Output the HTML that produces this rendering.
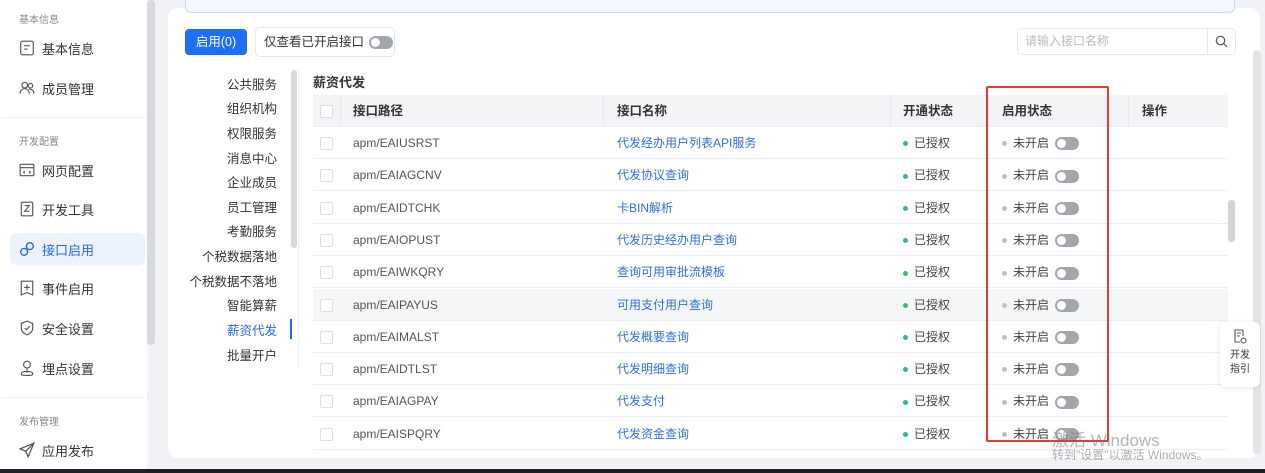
<!DOCTYPE html>
<html><head><meta charset="utf-8"><style>
*{margin:0;padding:0;box-sizing:border-box}
body{width:1265px;height:473px;overflow:hidden;background:#f0f2f5;font-family:"Liberation Sans","Noto Sans CJK SC",sans-serif;font-size:12px;color:#333;position:relative}
.a{position:absolute}
.side{left:0;top:0;width:147px;height:470px;background:#fff}
.sec{left:19px;font-size:10px;color:#888}
.it{left:19px;font-size:13px;color:#333;display:flex;align-items:center;gap:7px;height:20px}
.it svg{width:16px;height:16px}
.hr{left:3px;width:142px;height:1px;background:#eef0f3}
.card{left:168px;top:8px;width:1092px;height:450px;background:#fff;border-radius:10px}
.cat{width:90px;text-align:right;font-size:12.5px;color:#333}
.tg{width:24px;height:13px;border-radius:7px;background:#a3a6ad;position:relative;display:inline-block;vertical-align:middle}
.tg:after{content:"";position:absolute;left:2px;top:2px;width:9px;height:9px;border-radius:50%;background:#fff}
.row{left:313px;width:915px;height:32px;border-bottom:1px solid #ebeef5;font-size:12px}
.row div{position:absolute;top:0;line-height:32px}
.cb{width:13px;height:13px;border:1px solid #dcdfe6;border-radius:2px;background:#fff;top:10px!important}
.dot{display:inline-block;width:5px;height:5px;border-radius:50%;margin-right:6px;vertical-align:middle}
</style></head><body>
<div class="a side"></div>
<div class="a" style="left:147px;top:0;width:8px;height:345px;background:#d8d9db;border-radius:4px"></div>
<div class="a sec" style="top:11px">基本信息</div>
<div class="a it" style="top:38px"><svg viewBox="0 0 14 14" fill="none" stroke="#555" stroke-width="1"><rect x="1.5" y="1" width="11" height="12" rx="1.5"/><path d="M4.5 5h5M4.5 8h3"/></svg>基本信息</div>
<div class="a it" style="top:78px"><svg viewBox="0 0 14 14" fill="none" stroke="#555" stroke-width="1"><circle cx="5" cy="4.5" r="2.5"/><circle cx="10" cy="5" r="2"/><path d="M1 12c0-3 2-4.5 4-4.5s4 1.5 4 4.5M9 8c2 0 4 1 4 4"/></svg>成员管理</div>
<div class="a hr" style="top:117px"></div>
<div class="a sec" style="top:133px">开发配置</div>
<div class="a it" style="top:160px"><svg viewBox="0 0 14 14" fill="none" stroke="#555" stroke-width="1"><rect x="1" y="2" width="12" height="10" rx="1"/><path d="M1 5h12M5 8l-1 1 1 1M9 8l1 1-1 1"/></svg>网页配置</div>
<div class="a it" style="top:199px"><svg viewBox="0 0 14 14" fill="none" stroke="#555" stroke-width="1"><rect x="2" y="1" width="10" height="12" rx="1"/><path d="M5 4h4l-4 5h4"/></svg>开发工具</div>
<div class="a" style="left:10px;top:233px;width:135px;height:32px;background:#edf3fe;border-radius:6px"></div>
<div class="a it" style="top:239px;color:#2468f2"><svg viewBox="0 0 14 14" fill="none" stroke="#2468f2" stroke-width="1.2"><circle cx="4.5" cy="9.5" r="3"/><circle cx="9.5" cy="4.5" r="3"/></svg>接口启用</div>
<div class="a it" style="top:278px"><svg viewBox="0 0 14 14" fill="none" stroke="#555" stroke-width="1"><path d="M2 1h10v12l-5-2-5 2z"/><path d="M7 4v5M4.5 6.5h5"/></svg>事件启用</div>
<div class="a it" style="top:318px"><svg viewBox="0 0 14 14" fill="none" stroke="#555" stroke-width="1"><path d="M7 1l5 2v4c0 3-2.5 5-5 6-2.5-1-5-3-5-6V3z"/><path d="M5 7l1.5 1.5L9.5 5.5"/></svg>安全设置</div>
<div class="a it" style="top:358px"><svg viewBox="0 0 14 14" fill="none" stroke="#555" stroke-width="1"><circle cx="7" cy="4" r="3"/><path d="M7 7v4M2 12c0-1.5 2-2 5-2s5 .5 5 2-2 1.5-5 1.5-5 0-5-1.5z"/></svg>埋点设置</div>
<div class="a hr" style="top:397px"></div>
<div class="a sec" style="top:413px">发布管理</div>
<div class="a it" style="top:440px"><svg viewBox="0 0 14 14" fill="none" stroke="#555" stroke-width="1.1"><path d="M13 1L1 6l5 2 2 5z"/><path d="M6 8l7-7"/></svg>应用发布</div>

<div class="a card"></div>
<div class="a" style="left:185px;top:0;width:1050px;height:13px;border:1px solid #c6dcf7;border-top:none;border-radius:0 0 6px 6px;background:#f4f8fe"></div>
<div class="a" style="left:185px;top:29px;width:62px;height:26px;background:#1f6ef8;color:#fff;border-radius:4px;text-align:center;line-height:26px;font-size:12.5px">启用(0)</div>
<div class="a" style="left:255px;top:27px;width:140px;height:30px;border:1px solid #e4e7ed;border-radius:5px;line-height:28px;padding-left:8px;font-size:12.5px">仅查看已开启接口 <span class="tg" style="margin-left:2px"></span></div>
<div class="a" style="left:1017px;top:28px;width:219px;height:27px;border:1px solid #e4e7ed;border-radius:5px;color:#bbb;line-height:25px;padding-left:7px;font-size:12px">请输入接口名称</div>
<div class="a" style="left:1207px;top:29px;width:1px;height:25px;background:#e4e7ed"></div>
<svg class="a" style="left:1215px;top:35px" width="13" height="13" viewBox="0 0 13 13" fill="none" stroke="#555" stroke-width="1.2"><circle cx="5.5" cy="5.5" r="4.2"/><path d="M8.7 8.7L12 12"/></svg>

<div class="a cat" style="left:187px;top:74px">公共服务</div>
<div class="a cat" style="left:187px;top:98px">组织机构</div>
<div class="a cat" style="left:187px;top:123px">权限服务</div>
<div class="a cat" style="left:187px;top:148px">消息中心</div>
<div class="a cat" style="left:187px;top:172px">企业成员</div>
<div class="a cat" style="left:187px;top:197px">员工管理</div>
<div class="a cat" style="left:187px;top:221px">考勤服务</div>
<div class="a cat" style="left:187px;top:246px">个税数据落地</div>
<div class="a cat" style="left:187px;top:271px">个税数据不落地</div>
<div class="a cat" style="left:187px;top:295px">智能算薪</div>
<div class="a cat" style="left:187px;top:320px;color:#2468f2">薪资代发</div>
<div class="a" style="left:290px;top:319px;width:2px;height:20px;background:#2468f2"></div>
<div class="a cat" style="left:187px;top:345px">批量开户</div>
<div class="a" style="left:291px;top:70px;width:6px;height:178px;background:#d8d9db;border-radius:3px"></div>
<div class="a" style="left:298px;top:70px;width:1px;height:298px;background:#eee"></div>

<div class="a" style="left:313px;top:72px;font-weight:bold;font-size:13px">薪资代发</div>
<div class="a" style="left:313px;top:95px;width:915px;height:32px;background:#f3f4f6;border-bottom:1px solid #ebeef5;font-weight:bold;font-size:12.5px;line-height:32px">
<div class="a cb" style="left:7px"></div>
<div class="a" style="left:27px;top:0;width:1px;height:32px;background:#e6e8ec"></div>
<div class="a" style="left:40px">接口路径</div>
<div class="a" style="left:290px;top:0;width:1px;height:32px;background:#e6e8ec"></div>
<div class="a" style="left:304px">接口名称</div>
<div class="a" style="left:577px;top:0;width:1px;height:32px;background:#e6e8ec"></div>
<div class="a" style="left:590px">开通状态</div>
<div class="a" style="left:675px;top:0;width:1px;height:32px;background:#e6e8ec"></div>
<div class="a" style="left:689px">启用状态</div>
<div class="a" style="left:815px;top:0;width:1px;height:32px;background:#e6e8ec"></div>
<div class="a" style="left:829px">操作</div>
</div>

<div id="rows"></div>
<script>
var d=[["EAIUSRST","代发经办用户列表API服务"],["EAIAGCNV","代发协议查询"],["EAIDTCHK","卡BIN解析"],["EAIOPUST","代发历史经办用户查询"],["EAIWKQRY","查询可用审批流模板"],["EAIPAYUS","可用支付用户查询"],["EAIMALST","代发概要查询"],["EAIDTLST","代发明细查询"],["EAIAGPAY","代发支付"],["EAISPQRY","代发资金查询"]];
var h="";d.forEach(function(r,i){var t=127+i*32.3;
h+='<div class="a row" style="top:'+t+'px;'+(i==5?'background:#f5f6f8':'')+'"><div class="cb" style="left:7px"></div><div style="left:40px;color:#555">apm/'+r[0]+'</div><div style="left:304px;color:#2f6ee6">'+r[1]+'</div><div style="left:590px;color:#444"><span class="dot" style="background:#2fbf71"></span>已授权</div><div style="left:689px;color:#444"><span class="dot" style="background:#c0c0c0"></span>未开启 <span class="tg" style="margin-left:3px"></span></div></div>';});
document.getElementById("rows").innerHTML=h;
</script>

<div class="a" style="left:986px;top:86px;width:123px;height:356px;border:2px solid #e53935;border-radius:2px"></div>
<div class="a" style="left:1228px;top:200px;width:7px;height:42px;background:#d3d4d6;border-radius:3px"></div>
<div class="a" style="left:1253px;top:50px;width:8px;height:405px;background:#e4e5e7;border-radius:4px"></div>
<div class="a" style="left:1220px;top:322px;width:40px;height:65px;background:#fff;border-radius:6px;box-shadow:0 1px 6px rgba(0,0,0,.1);text-align:center;font-size:10px;line-height:14px;padding-top:7px">
<svg width="14" height="15" viewBox="0 0 14 15" fill="none" stroke="#555" stroke-width="1.1"><path d="M10 7V1H2v12h5"/><path d="M4 4h4M4 7h3"/><circle cx="10.5" cy="11.5" r="2.5"/></svg><br>开发<br>指引</div>
<div class="a" style="left:1052px;top:426px;font-size:17px;color:rgba(120,120,120,.55)">激活 Windows</div>
<div class="a" style="left:1052px;top:446px;font-size:12px;color:rgba(120,120,120,.6)">转到"设置"以激活 Windows。</div>
<div class="a" style="left:0;top:469px;width:1265px;height:4px;background:#202024"></div>
</body></html>
